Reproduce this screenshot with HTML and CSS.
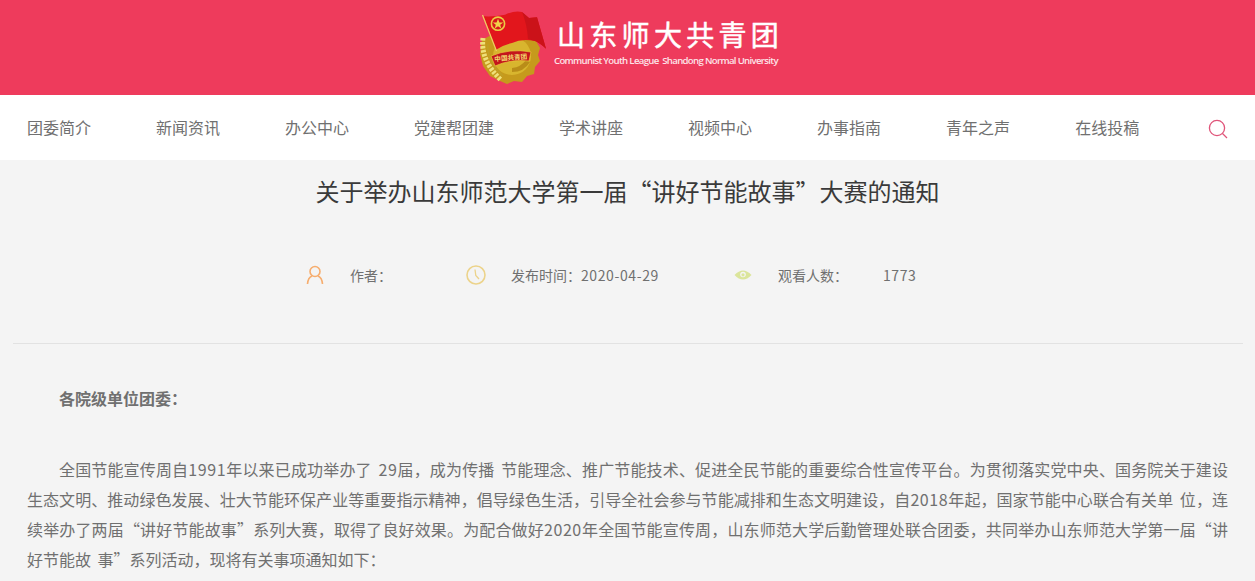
FILE: index.html
```html
<!DOCTYPE html>
<html lang="zh-CN">
<head>
<meta charset="utf-8">
<title>关于举办山东师范大学第一届“讲好节能故事”大赛的通知</title>
<link rel="stylesheet" href="styles.css">
</head>
<body>
<header class="banner">
  <div class="brand">
    <svg class="emblem" viewBox="0 0 72 76" width="72" height="76" aria-hidden="true">
      <path d="M34 15 L42 17 L47 14 L53 20 L59 24 L60 31 L64 38 L62 45 L64 51 L59 57 L58 64 L51 66 L46 72 L38 71 L31 74 L24 71 L14 66 L7 56 L4 44 L6 30 Z" fill="#c69a1c"/>
      <circle cx="36" cy="46" r="19" fill="#d8b52e"/>
      <path d="M36 62 Q48 62 54 52 L50 50 Q45 57 36 58 Z" fill="#b98d18"/>
      <path d="M7 28 Q4 50 25 70" fill="none" stroke="#efe07a" stroke-width="5" stroke-dasharray="2.6 1.4"/>
      <path d="M12 34 Q10 50 27 66" fill="none" stroke="#bfa028" stroke-width="1.2"/>
      <path d="M15 46 Q34 38 55 42 L53 51 Q34 49 19 56 Z" fill="#c4161c" stroke="#e8c83c" stroke-width=".7"/>
      <text class="ribbon" x="35" y="50" text-anchor="middle" transform="rotate(-5 35 50)">中国共青团</text>
      <path d="M7.7 6.3 Q18 7 29 4.7 Q38 0.5 46 2 L53 8 L61 7.3 L70 38.7 Q64 33 59 31 Q46 28 36 33 Q27 35 20 39.7 Z" fill="#e2161c"/>
      <path d="M46 2 L53 8 L61 7.3 L70 38.7 Q64 33 59 31 L52 29 Q51 14 46 2 Z" fill="#cb1219"/>
      <line x1="6.5" y1="5" x2="20.5" y2="41" stroke="#eed060" stroke-width="1.2"/>
      <circle cx="22" cy="13.7" r="7.4" fill="#eccb44"/>
      <circle cx="22" cy="13.7" r="5.8" fill="#d8161c"/>
      <path d="M22 8.8 L23.4 12.4 L27.2 12.4 L24.2 14.8 L25.3 18.5 L22 16.3 L18.7 18.5 L19.8 14.8 L16.8 12.4 L20.6 12.4 Z" fill="#f2d24a"/>
    </svg>
    <div class="brand-text">
      <div class="brand-cn">山东师大共青团</div>
      <div class="brand-en">Communist Youth League&nbsp; Shandong Normal University</div>
    </div>
  </div>
</header>
<nav class="nav">
  <a>团委简介</a><a>新闻资讯</a><a>办公中心</a><a>党建帮团建</a><a>学术讲座</a><a>视频中心</a><a>办事指南</a><a>青年之声</a><a>在线投稿</a>
  <svg class="search" viewBox="0 0 20 20" width="20" height="20" aria-hidden="true"><circle cx="9" cy="9" r="7.6" fill="none" stroke="#e0557a" stroke-width="1.3"/><path d="M14.5 14.5 L19 19" stroke="#e0557a" stroke-width="1.3"/></svg>
</nav>
<main class="article">
  <h1 class="title">关于举办山东师范大学第一届“讲好节能故事”大赛的通知</h1>
  <div class="meta">
    <svg class="ic-user" viewBox="0 0 18 20" width="18" height="20" aria-hidden="true"><circle cx="9" cy="6.5" r="5" fill="none" stroke="#f6ad6e" stroke-width="1.6"/><path d="M1.5 19 Q2 12.5 6 11 M16.5 19 Q16 12.5 12 11" fill="none" stroke="#f6ad6e" stroke-width="1.6"/></svg>
    <span class="m-author">作者：</span>
    <svg class="ic-clock" viewBox="0 0 20 20" width="20" height="20" aria-hidden="true"><circle cx="10" cy="10" r="9" fill="none" stroke="#ecd38a" stroke-width="1.6"/><path d="M9 4.5 L9.8 10.5 L13 14" fill="none" stroke="#ecd38a" stroke-width="1.3"/></svg>
    <span class="m-date">发布时间：<span class="num">2020-04-29</span></span>
    <svg class="ic-eye" viewBox="0 0 18 12" width="18" height="12" aria-hidden="true"><path d="M0.5 6 Q9 -3 17.5 6 Q9 15 0.5 6 Z" fill="#dbe59b"/><circle cx="9" cy="5.5" r="2.8" fill="#f4f4f4"/><circle cx="9" cy="5.8" r="1.6" fill="#dbe59b"/></svg>
    <span class="m-views">观看人数：</span>
    <span class="num">1773</span>
  </div>
  <hr class="rule">
  <div class="body">
    <p class="greet"><strong>各院级单位团委：</strong></p>
    <p class="para">全国节能宣传周自<span class="num">1991</span>年以来已成功举办了 <span class="num">29</span>届，成为传播 节能理念、推广节能技术、促进全民节能的重要综合性宣传平台。为贯彻落实党中央、国务院关于建设生态文明、推动绿色发展、壮大节能环保产业等重要指示精神，倡导绿色生活，引导全社会参与节能减排和生态文明建设，自<span class="num">2018</span>年起，国家节能中心联合有关单 位，连续举办了两届“讲好节能故事”系列大赛，取得了良好效果。为配合做好<span class="num">2020</span>年全国节能宣传周，山东师范大学后勤管理处联合团委，共同举办山东师范大学第一届“讲好节能故 事”系列活动，现将有关事项通知如下：</p>
  </div>
</main>
</body>
</html>
```
FILE: styles.css
```css
* { box-sizing: border-box; }
html, body { margin: 0; padding: 0; }
body {
  background: #f4f4f4;
  color: #707070;
  font-family: "Noto Sans CJK SC", "Liberation Sans", sans-serif;
  font-size: 14px;
  overflow: hidden;
  height: 581px;
}
.banner {
  height: 95px;
  background: #ee3b5c;
  display: flex;
  justify-content: center;
  align-items: flex-start;
}
.brand { display: flex; align-items: flex-start; padding-top: 10px; margin-right: 1px; }
.ribbon { font-size: 6.6px; font-weight: 700; fill: #f3dc70; }
.brand-text { margin-left: 6px; width: 224px; padding-top: 5px; }
.brand-cn {
  color: #fff;
  font-family: "Noto Sans CJK SC", sans-serif;
  font-weight: 400;
  -webkit-text-stroke: 0.5px #fff;
  font-size: 28px;
  line-height: 38px;
  letter-spacing: 4.3px;
  padding-left: 3px;
  white-space: nowrap;
}
.brand-en {
  color: #fde4e9;
  font-family: "Open Sans", sans-serif;
  font-weight: 600;
  font-size: 9.6px;
  line-height: 14px;
  letter-spacing: -0.67px;
  margin-top: 1px;
  white-space: nowrap;
}
.nav {
  height: 65px;
  background: #fff;
  display: flex;
  align-items: center;
  gap: 65px;
  padding: 0 27px 2px;
  font-size: 16px;
  color: #707070;
}
.nav a { white-space: nowrap; }
.search { margin-left: auto; margin-top: 4px; }
.title {
  margin: 0;
  padding-top: 13px;
  text-align: center;
  font-size: 24px;
  font-weight: 400;
  line-height: 35px;
  color: #3a3a3a;
}
.meta {
  display: flex;
  align-items: center;
  height: 24px;
  margin-top: 55px;
  padding-left: 306px;
  font-size: 14px;
  white-space: nowrap;
}
.meta .num { letter-spacing: 0.6px; }
.ic-user { margin-right: 26px; }
.m-author { width: 116px; }
.ic-clock { margin-right: 25px; }
.m-date { width: 223px; }
.ic-eye { margin-right: 26px; }
.m-views { width: 105px; }
.rule {
  border: 0;
  border-top: 1px solid #e2e2e2;
  margin: 56px 12px 0 13px;
}
.body { padding: 0 27px; font-size: 16px; line-height: 30px; }
.body p { margin: 0; text-indent: 32px; }
.body .num { letter-spacing: 0.6px; }
.greet { padding-top: 39px; }
.para { padding-top: 41px; word-spacing: 3px; text-align: justify; }
```
